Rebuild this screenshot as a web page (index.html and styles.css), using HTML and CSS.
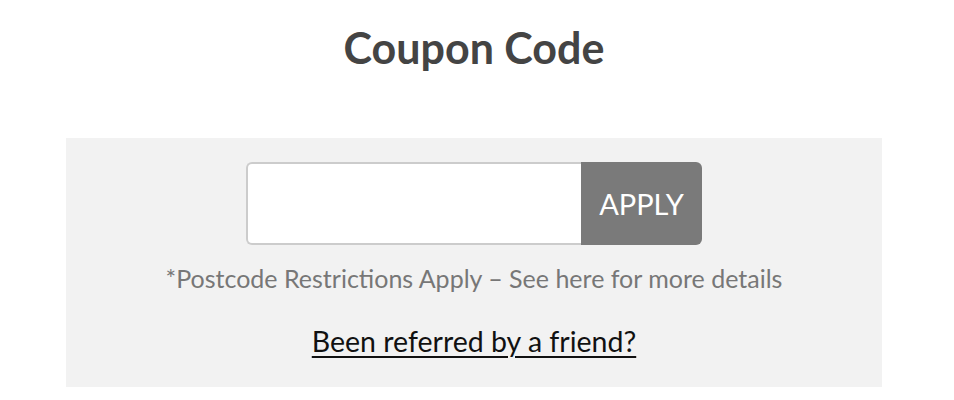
FILE: index.html
```html
<!DOCTYPE html>
<html lang="en">
<head>
  <meta charset="UTF-8">
  <meta name="viewport" content="width=device-width, initial-scale=1.0">
  <title>Coupon Code</title>
  <link rel="stylesheet" href="styles.css">
</head>
<body>
  <div class="page">
    <h1 class="title">Coupon Code</h1>

    <div class="coupon-box">
      <form class="coupon-form">
        <input type="text" class="coupon-input" aria-label="Coupon code">
        <button type="button" class="coupon-apply">APPLY</button>
      </form>
      <p class="coupon-note">*Postcode Restrictions Apply – See here for more details</p>
      <a class="referral-link" href="#">Been referred by a friend?</a>
    </div>
  </div>
</body>
</html>
```

FILE: styles.css
```css
body { margin: 0; font-family: Lato, "Open Sans", sans-serif; background: #fff; }
.page { width: 948px; padding-top: 22px; }
.title { margin: 0; text-align: center; font-size: 43px; font-weight: 700; color: #444; line-height: 52px; }
.coupon-box { width: 816px; margin: 64px auto 0; padding: 24px 0 28px; background: #f2f2f2; text-align: center; }
.coupon-form { display: flex; justify-content: center; }
.coupon-input { width: 335px; height: 83px; box-sizing: border-box; border: 2px solid #ccc; border-right: none; border-radius: 6px 0 0 6px; background: #fff; padding: 0 12px; font-size: 20px; outline: none; }
.coupon-apply { width: 121px; height: 83px; border: none; border-radius: 0 6px 6px 0; background: #7a7a7a; color: #fff; font-family: inherit; font-size: 29px; padding: 0; }
.coupon-note { margin: 17px 0 0; font-size: 25px; color: #777; line-height: 32px; }
.referral-link { display: inline-block; margin-top: 29px; font-size: 28.5px; color: #111; line-height: 36px; text-decoration: underline; text-underline-offset: 4px; text-decoration-thickness: 2px; }
```
